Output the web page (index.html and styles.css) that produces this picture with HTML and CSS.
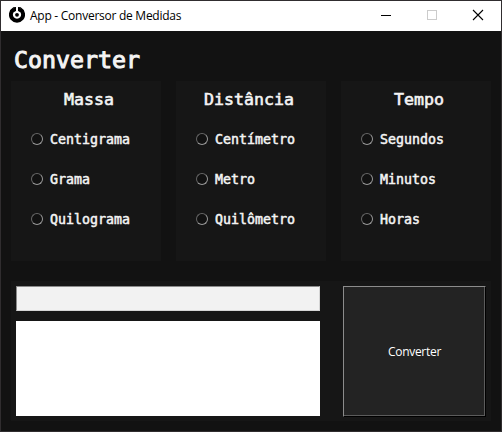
FILE: index.html
```html
<!DOCTYPE html>
<html lang="pt-BR">
<head>
<meta charset="utf-8">
<title>App - Conversor de Medidas</title>
<link rel="stylesheet" href="styles.css">
</head>
<body>
<div class="window">
  <header class="titlebar">
    <svg class="logo" width="16" height="16" viewBox="0 0 16 16"><path d="M5 2.3A6.1 6.1 0 1 0 11 2.3" fill="none" stroke="#000" stroke-width="4"/><path d="M4 .2L7 0V4L4.8 5Z M12 .2L9 0V4L11.2 5Z"/><circle cx="8" cy="7.8" r="1.9"/></svg>
    <span class="caption">App - Conversor de Medidas</span>
    <svg class="controls" width="138" height="30" viewBox="0 0 138 30" fill="none" shape-rendering="crispEdges"><path d="M18 14.5H28" stroke="#000"/><rect x="64.5" y="9.5" width="9" height="9" stroke="#ccc"/><path d="M110 9L120 19M120 9L110 19" stroke="#000" stroke-width="1.1" shape-rendering="auto"/></svg>
  </header>
  <main class="content">
    <h1>Converter</h1>
    <div class="groups">
      <section class="panel"><h2>Massa</h2>
        <label><i class="radio"></i>Centigrama</label><label><i class="radio"></i>Grama</label><label><i class="radio"></i>Quilograma</label></section>
      <section class="panel"><h2 class="wide">Distância</h2>
        <label><i class="radio"></i>Centímetro</label><label><i class="radio"></i>Metro</label><label><i class="radio"></i>Quilômetro</label></section>
      <section class="panel"><h2>Tempo</h2>
        <label><i class="radio"></i>Segundos</label><label><i class="radio"></i>Minutos</label><label><i class="radio"></i>Horas</label></section>
    </div>
    <section class="panel converter">
      <div class="fields"><div class="entry"></div><div class="output"></div></div>
      <button class="convert"><span>Converter</span></button>
    </section>
  </main>
</div>
</body>
</html>
```
FILE: styles.css
```css
* { box-sizing: border-box; }
body { margin: 0; width: 502px; height: 432px; overflow: hidden; }
.window { width: 502px; height: 432px; border: 1px solid #302d2f; background: #121212; }
.titlebar { height: 30px; background: #fff; display: flex; align-items: center; padding-left: 8px; }
.logo { margin-top: -2px; }
.caption { margin-left: 5px; width: 300px; font: 12px/16px "Open Sans", sans-serif; letter-spacing: -0.26px; color: #000; }
.controls { margin-left: auto; flex: none; }
.content { padding: 10px; color: #f4f4f4; font-family: "DejaVu Sans Mono", monospace; }
h1 { margin: 0; padding-left: 3px; height: 40px; font-size: 23.25px; line-height: 37px; font-weight: 400; -webkit-text-stroke: 1px #f4f4f4; }
.groups { display: flex; gap: 15px; }
.panel { background: #161616; }
.groups .panel { width: 150px; height: 180px; -webkit-text-stroke: 0.5px #f4f4f4; }
h2 { margin: 0; padding: 4px 0 0 6px; height: 38px; font-size: 16.6px; line-height: 30px; font-weight: 400; text-align: center; -webkit-text-stroke: 0.6px #f4f4f4; }
h2.wide { padding: 4px 4px 0 0; }
label { display: flex; align-items: center; height: 40px; padding-left: 20px; font-size: 13.29px; }
.radio { width: 12px; height: 12px; margin-right: 7px; border: 1px solid; border-color: #666 #999 #999 #666; border-radius: 50%; background: #111; }
.converter { margin-top: 20px; height: 140px; display: flex; padding: 5px; }
.fields { width: 304px; display: flex; flex-direction: column; gap: 10px; }
.entry { height: 25px; background: #f2f2f2; border: 1px solid; border-color: #8b8b8b #d5d5d5 #d5d5d5 #8b8b8b; }
.output { height: 95px; background: #fff; }
.convert { margin-left: 23px; width: 143px; height: 131px; padding: 0; border: 1px solid; border-color: #8c8c8c #000 #000 #8c8c8c; border-radius: 0; background: #232323; box-shadow: inset -1px -1px #5c5c5c; color: #fff; font: 12px/16px "Open Sans", sans-serif; letter-spacing: -0.3px; }
```
